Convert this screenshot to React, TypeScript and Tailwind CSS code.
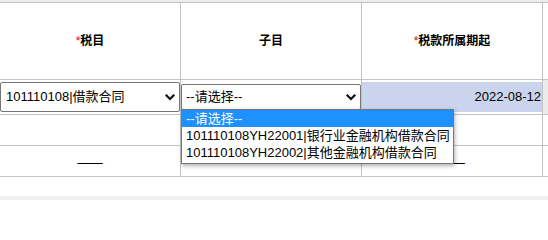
import React from 'react';

const FONT = "font-['Liberation_Sans','Noto_Sans_CJK_SC',sans-serif]";

const OPTIONS = [
    '--请选择--',
    '101110108YH22001|银行业金融机构借款合同',
    '101110108YH22002|其他金融机构借款合同',
];

function Chevron() {
    return (
        <svg width="10" height="7" viewBox="0 0 10 7" className="shrink-0">
            <polyline points="1.5,1.5 5,5 8.5,1.5" fill="none" stroke="#111" strokeWidth="2.2" strokeLinecap="square" />
        </svg>
    );
}

function Header({ label, required }: { label: string; required?: boolean }) {
    return (
        <div className="flex items-center justify-center border-r border-b border-[#c3c3c3] text-[12px] font-bold text-black">
            {required && <span className="text-[#e00] font-normal">*</span>}
            {label}
        </div>
    );
}

function Blank() {
    return (
        <div className="flex items-center justify-center border-r border-b border-[#c3c3c3] pb-[10px] text-[15px] text-black">___</div>
    );
}

export default function App() {
    return (
        <div className={`relative w-[548px] h-[200px] overflow-hidden bg-white ${FONT}`}>
            <div className="h-[2px] bg-[#ececec]" />
            <div className="grid grid-cols-[181px_181px_181px_1fr] grid-rows-[77px_35px_31px_31px] border-t border-[#c3c3c3]">
                {/* header */}
                <Header label="税目" required />
                <Header label="子目" />
                <Header label="税款所属期起" required />
                <div className="border-b border-[#c3c3c3]" />

                {/* row 1: inputs */}
                <div className="border-r border-b border-[#c3c3c3] pt-[2px]">
                    <div className="flex items-center justify-between h-[30px] w-[180px] border border-[#767676] rounded-[2px] bg-white pl-[5px] pr-[4px] text-[13px] text-black">
                        <span>101110108|借款合同</span>
                        <Chevron />
                    </div>
                </div>
                <div className="flex items-center border-r border-b border-[#c3c3c3]">
                    <div className="flex items-center justify-between h-[26px] w-[180px] border border-[#767676] rounded-[2px] bg-white pl-[4px] pr-[4px] text-[13px] text-black">
                        <span>--请选择--</span>
                        <Chevron />
                    </div>
                </div>
                <div className="border-r border-b border-[#c3c3c3] pt-[2px]">
                    <div className="flex items-center justify-end h-[30px] bg-[#cad4ed] pr-[1px] text-[13px] text-black">
                        2022-08-12
                    </div>
                </div>
                <div className="border-b border-[#c3c3c3] bg-[#ebebeb]" />

                {/* row 2 */}
                <div className="border-r border-b border-[#c3c3c3]" />
                <div className="border-r border-b border-[#c3c3c3]" />
                <div className="border-r border-b border-[#c3c3c3]" />
                <div className="border-b border-[#c3c3c3]" />

                {/* row 3 */}
                <Blank />
                <Blank />
                <Blank />
                <div className="border-b border-[#c3c3c3]" />
            </div>
            <div className="absolute left-0 right-0 bottom-0 h-[4px] bg-[#f0f0f0]" />

            {/* open dropdown list */}
            <div className="absolute left-[181px] top-[109px] w-[273px] border border-[#767676] bg-white pb-[2px] shadow-[1px_2px_4px_rgba(0,0,0,0.3)] text-[13px] text-black">
                {OPTIONS.map((opt, i) => (
                    <div
                        key={opt}
                        className={`h-[17px] leading-[17px] pl-[4px] whitespace-nowrap ${i === 0 ? 'bg-[#1e90ff] text-white' : ''}`}
                    >
                        {opt}
                    </div>
                ))}
            </div>
        </div>
    );
}
